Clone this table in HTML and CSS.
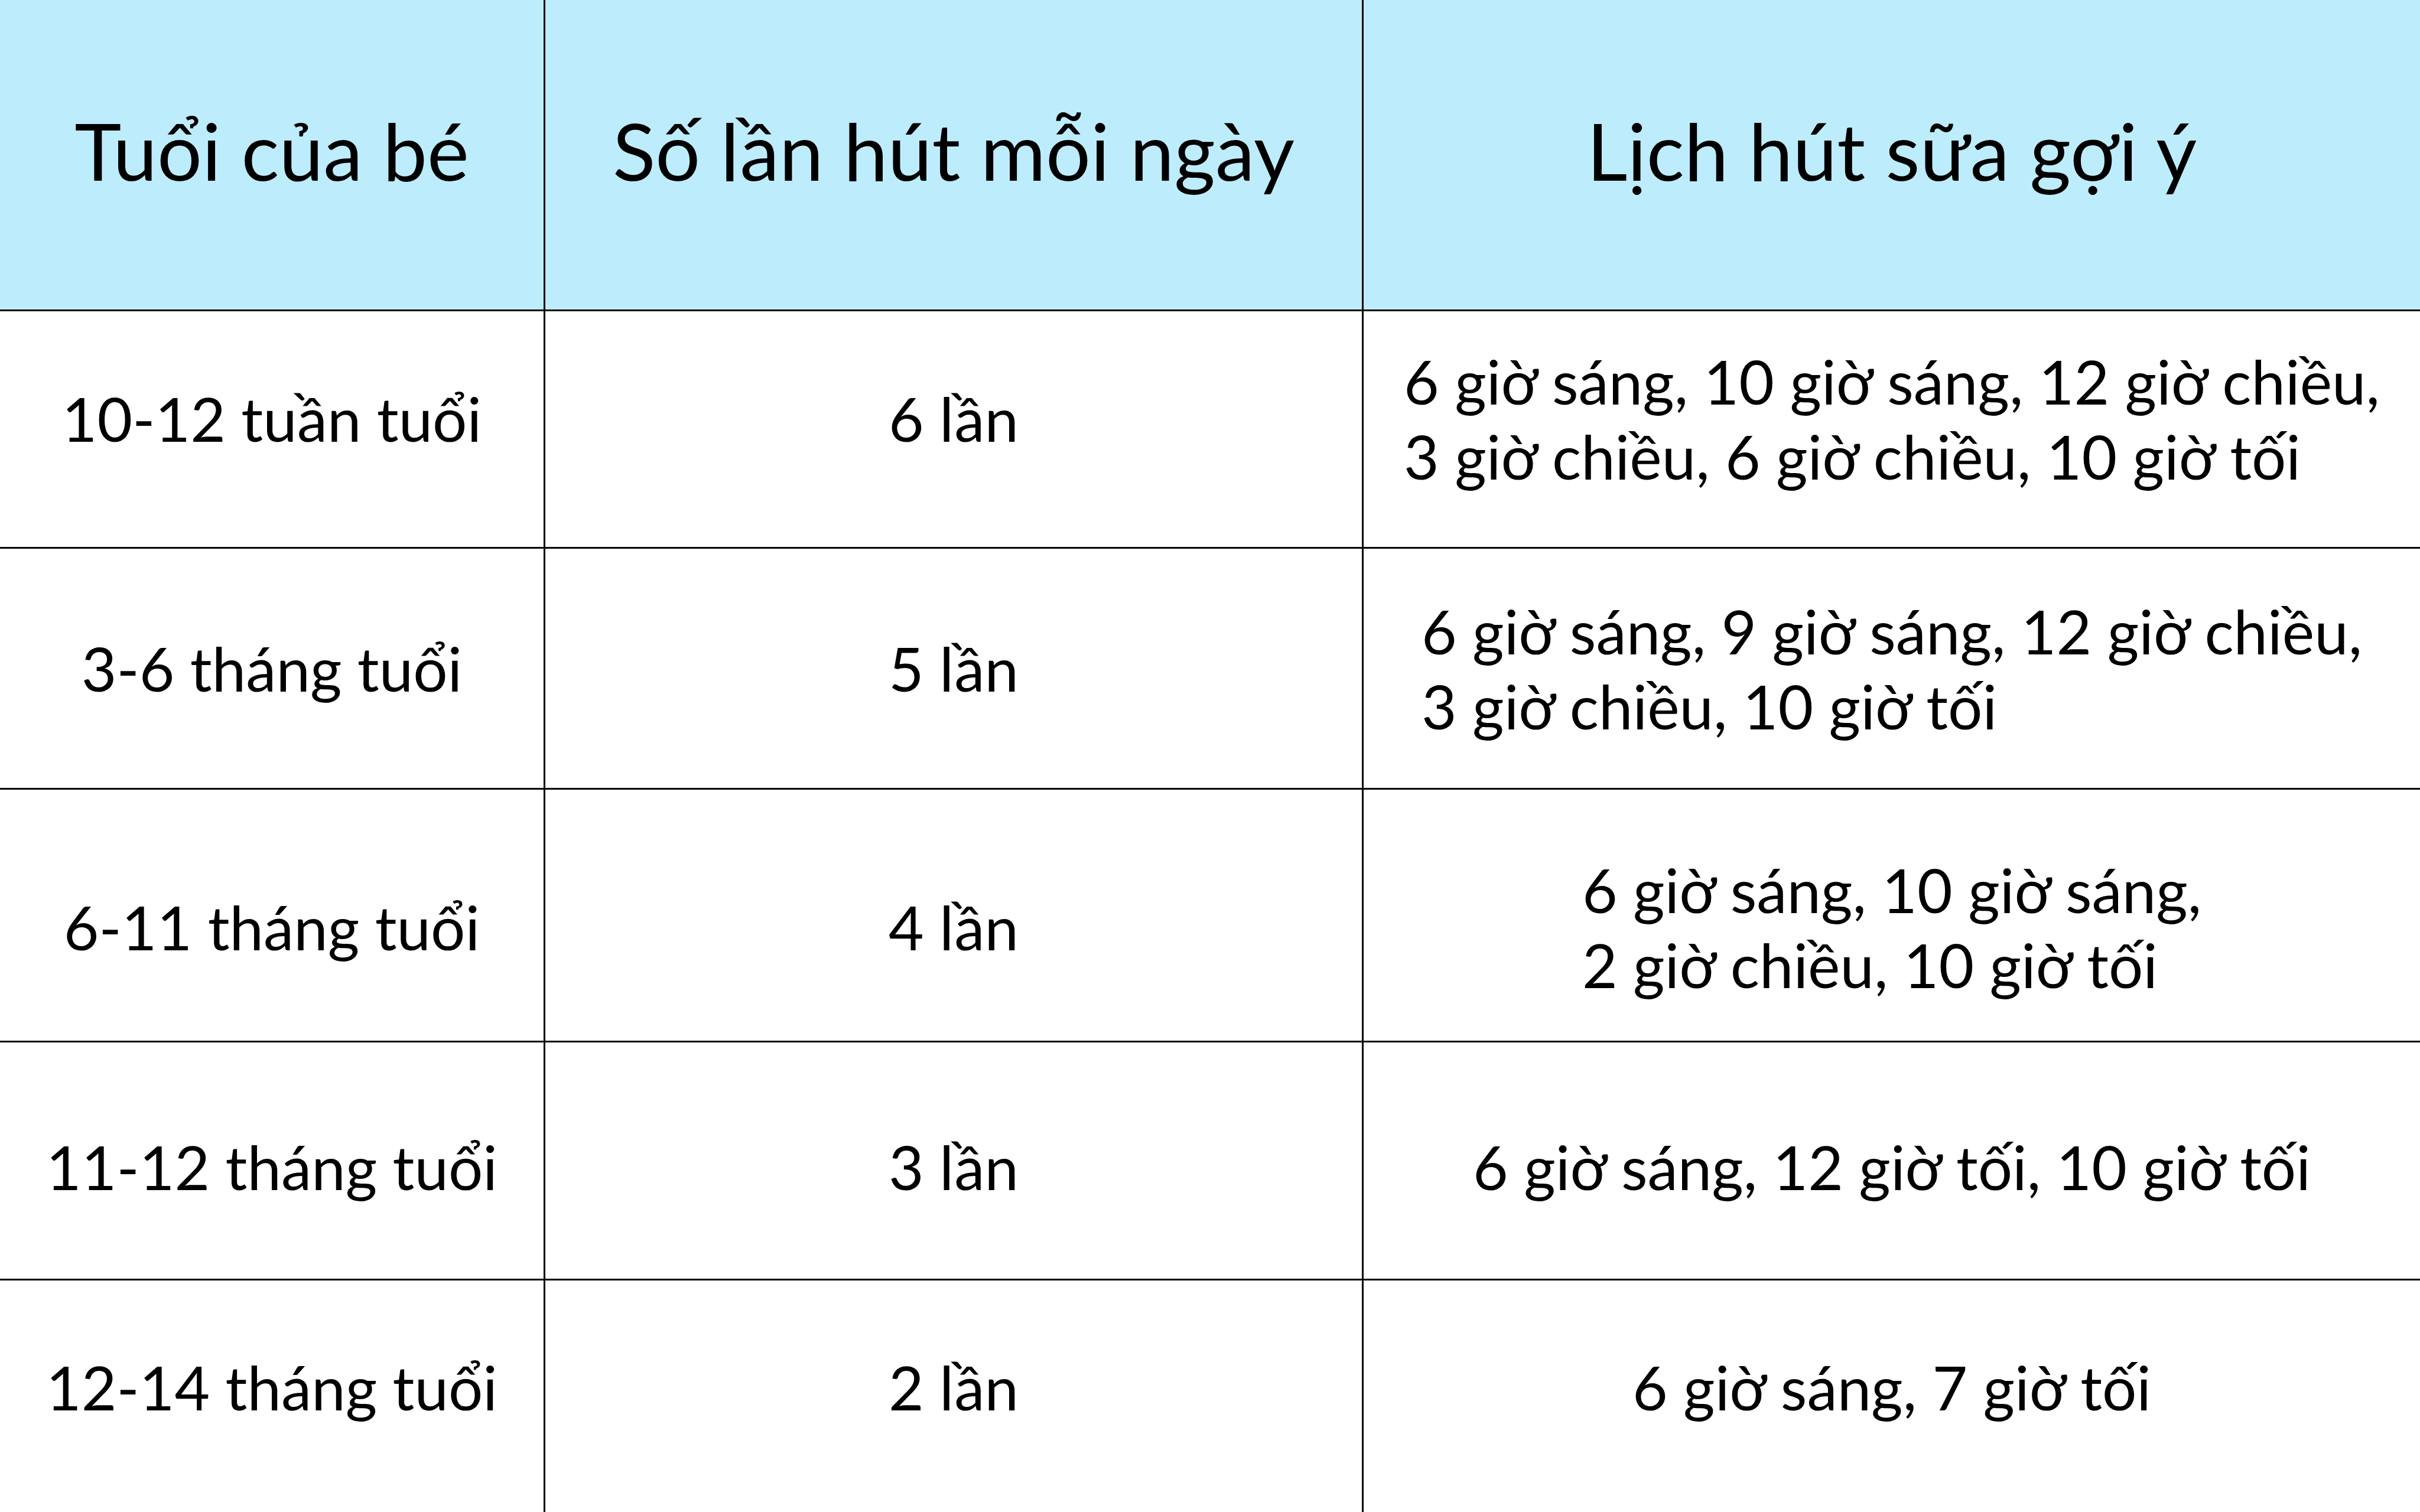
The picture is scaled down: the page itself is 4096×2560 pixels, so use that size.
FILE: index.html
```html
<!DOCTYPE html>
<html lang="vi">
<head>
<meta charset="utf-8">
<title>Lịch hút sữa</title>
<link rel="stylesheet" href="styles.css">
</head>
<body>
<div class="table">
  <div class="cell head">Tuổi của bé</div>
  <div class="cell head">Số lần hút mỗi ngày</div>
  <div class="cell head last-col">Lịch hút sữa gợi ý</div>

  <div class="cell r1">10-12 tuần tuổi</div>
  <div class="cell r1">6 lần</div>
  <div class="cell r1 last-col"><span class="sched">6 giờ sáng, 10 giờ sáng, 12 giờ chiều,<br>3 giờ chiều, 6 giờ chiều, 10 giờ tối</span></div>

  <div class="cell">3-6 tháng tuổi</div>
  <div class="cell">5 lần</div>
  <div class="cell last-col"><span class="sched">6 giờ sáng, 9 giờ sáng, 12 giờ chiều,<br>3 giờ chiều, 10 giờ tối</span></div>

  <div class="cell r3">6-11 tháng tuổi</div>
  <div class="cell r3">4 lần</div>
  <div class="cell r3 last-col"><span class="sched">6 giờ sáng, 10 giờ sáng,<br>2 giờ chiều, 10 giờ tối</span></div>

  <div class="cell r4">11-12 tháng tuổi</div>
  <div class="cell r4">3 lần</div>
  <div class="cell r4 last-col"><span class="sched">6 giờ sáng, 12 giờ tối, 10 giờ tối</span></div>

  <div class="cell r5 last-row">12-14 tháng tuổi</div>
  <div class="cell r5 last-row">2 lần</div>
  <div class="cell r5 last-row last-col"><span class="sched">6 giờ sáng, 7 giờ tối</span></div>
</div>
</body>
</html>
```

FILE: styles.css
```css
html, body {
  margin: 0;
  padding: 0;
  background: #ffffff;
}

body {
  width: 4096px;
  height: 2560px;
  overflow: hidden;
  font-family: Lato, "Noto Sans", sans-serif;
  color: #000000;
}

.table {
  display: grid;
  grid-template-columns: 923px 1385px 1788px;
  grid-template-rows: 527px 402px 408px 428px 403px 392px;
}

.cell {
  box-sizing: border-box;
  display: flex;
  align-items: center;
  justify-content: center;
  border-right: 3px solid #000;
  border-bottom: 3px solid #000;
  font-size: 103px;
  line-height: 127px;
  text-align: center;
}

.head {
  background: #bdedfd;
  font-size: 134px;
  padding-bottom: 16px;
}

.r1 {
  padding-bottom: 36px;
}

.r3 {
  padding-top: 40px;
}

.r4 {
  padding-top: 20px;
}

.r5 {
  padding-bottom: 32px;
}

.last-col {
  border-right: none;
}

.last-row {
  border-bottom: none;
}

.sched {
  display: inline-block;
  text-align: left;
}
```
